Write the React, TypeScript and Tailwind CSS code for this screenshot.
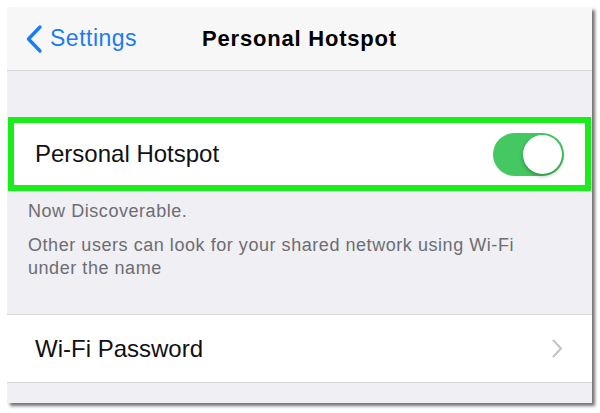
import React from "react";

export default function App() {
  return (
    <div className="w-[600px] h-[413px] bg-white pl-[7px] pt-[7px]" style={{ fontFamily: '"Liberation Sans", Arial, sans-serif' }}>
      <div className="w-[585px] h-[396px] bg-[#efeff4] shadow-[3px_3px_3px_rgba(0,0,0,0.55)] flex flex-col">
        {/* Nav bar */}
        <div className="h-[64px] bg-[#f7f7f7] border-b border-[#d6d6da] relative flex items-center">
          <div className="flex items-center pl-[18px] text-[#1b7cf2]">
            <svg width="18" height="30" viewBox="0 0 18 30" className="mt-[1px]">
              <path d="M15 3 L3.5 15 L15 27" stroke="#1b7cf2" strokeWidth="3.4" fill="none" strokeLinecap="round" strokeLinejoin="round" />
            </svg>
            <span className="ml-[7px] text-[23px] tracking-[0.5px]">Settings</span>
          </div>
          <div className="absolute left-0 right-0 text-center text-[22px] font-bold text-black tracking-[0.8px] pointer-events-none">Personal Hotspot</div>
        </div>
        <div className="h-[46px]" />
        {/* Green-highlighted row */}
        <div className="mx-[1px] h-[74px] border-[6px] border-[#1aee1a] bg-white flex items-center justify-between pl-[21px] pr-[21px]">
          <span className="text-[24px] text-[#111]">Personal Hotspot</span>
          <div className="w-[71px] h-[43px] rounded-full bg-[#45c862] relative">
            <div className="absolute right-[2px] top-[2px] w-[39px] h-[39px] rounded-full bg-white shadow-[0_2px_4px_rgba(0,0,0,0.3)]" />
          </div>
        </div>
        <div className="pl-[21px] pt-[9px] text-[18px] leading-[23px] tracking-[0.55px] text-[#6d6d72] h-[123px]">
          <div className="mb-[11px]">Now Discoverable.</div>
          <div>Other users can look for your shared network using Wi-Fi</div>
          <div>under the name</div>
        </div>
        {/* Wi-Fi Password row */}
        <div className="h-[69px] bg-white border-y border-[#d6d6da] flex items-center justify-between pl-[28px] pr-[29px]">
          <span className="text-[24px] text-[#111]">Wi-Fi Password</span>
          <svg width="11" height="19" viewBox="0 0 11 19">
            <path d="M1.5 1.5 L9 9.5 L1.5 17.5" stroke="#c2c2c7" strokeWidth="2" fill="none" strokeLinecap="round" strokeLinejoin="round" />
          </svg>
        </div>
      </div>
    </div>
  );
}
